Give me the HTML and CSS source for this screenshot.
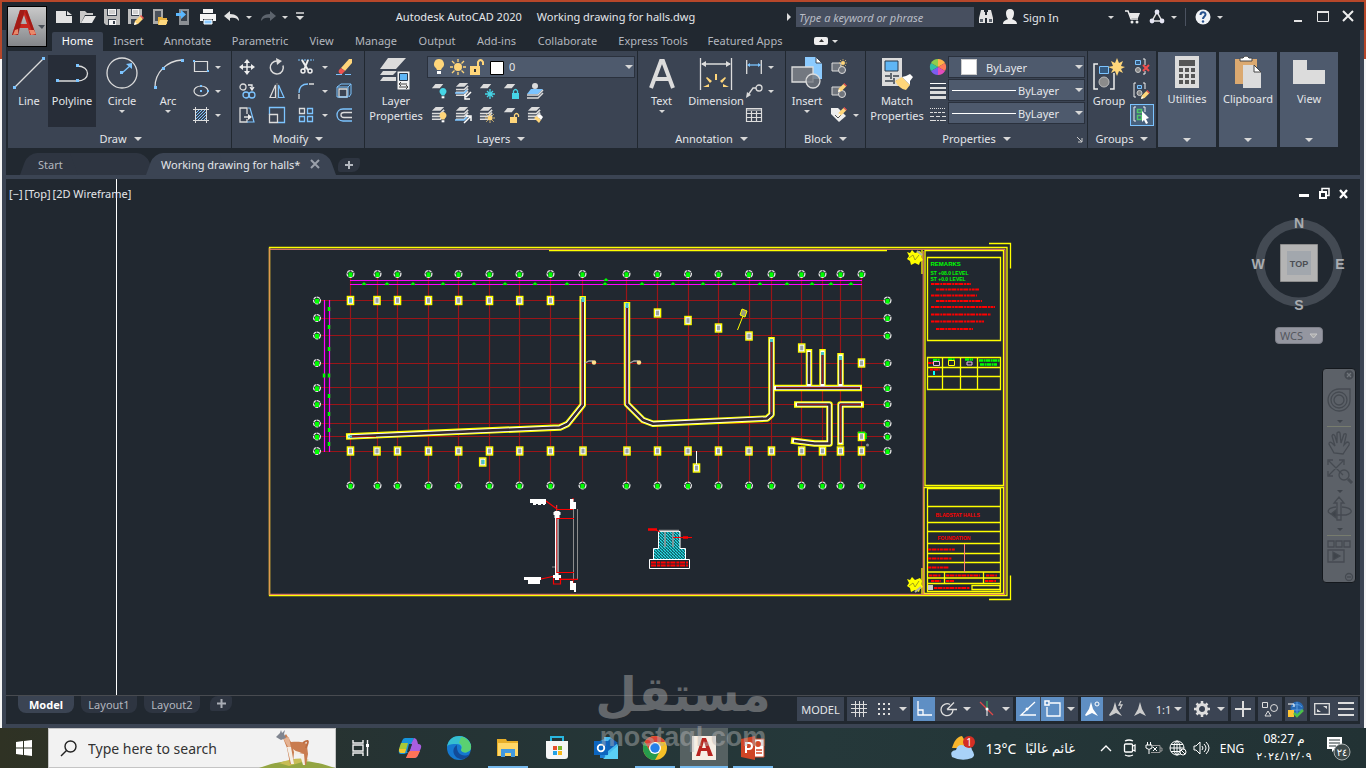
FILE: index.html
```html
<!DOCTYPE html>
<html lang="en">
<head>
<meta charset="utf-8">
<title>Autodesk AutoCAD 2020 - Working drawing for halls.dwg</title>
<link rel="stylesheet" href="styles.css">
</head>
<body>
<svg class="defs" aria-hidden="true">
  <defs>
    <symbol id="sheet" viewBox="0 0 16 16"><path d="M5 1h9l-4 5H1z" fill="#dcdcdc"/></symbol>
    <symbol id="stack" viewBox="0 0 16 16"><path d="M5 0h9l-4 4H1z" fill="#dcdcdc"/><path d="M1 7h9l4-4M1 10h9l4-4M1 13h9l4-4" fill="none" stroke="#dcdcdc" stroke-width="1.700"/></symbol>
    <symbol id="bulb" viewBox="0 0 10 16"><path d="M5 0a5 5 0 0 1 3 9l-1 2H3L2 9a5 5 0 0 1 3-9z"/><path d="M3 12h4v3H3z" fill="#fff"/></symbol>
    <symbol id="sun" viewBox="0 0 16 16"><circle cx="8" cy="8" r="4"/><path d="M8 0v3M8 13v3M0 8h3M13 8h3M2 2l2.500 2.500M11.500 11.500L14 14M14 2l-2.500 2.500M4.500 11.500L2 14" stroke="currentColor" stroke-width="1.300"/></symbol>
    <symbol id="pencil" viewBox="0 0 10 10"><path d="M0 10l1-4 5-5 3 3-5 5z" fill="#ffd67a"/><path d="M6 1l1-1 3 3-1 1z" fill="#f0534f"/><path d="M0 10l1-3 2 2z" fill="#fff"/></symbol>
    <pattern id="hatch" width="3" height="3" patternUnits="userSpaceOnUse"><path d="M0 3l3-3" stroke="#7cc4ff"/></pattern>
    <pattern id="tealhatch" width="3" height="3" patternUnits="userSpaceOnUse"><rect width="3" height="3" fill="#0d5a62"/><path d="M0 0l3 3" stroke="#29e0ea" stroke-width="1.200"/></pattern>
    <marker id="bubble" markerUnits="userSpaceOnUse" markerWidth="12" markerHeight="12" refX="6" refY="6" viewBox="0 0 12 12"><circle cx="6" cy="6" r="3.400" fill="#212830" stroke="#e6e6e6" stroke-width="1.300" stroke-dasharray="3.300 .6"/><rect x="4" y="4.300" width="4" height="4.700" fill="#0f0"/></marker>
    <marker id="footing" markerUnits="userSpaceOnUse" markerWidth="10" markerHeight="12" refX="5" refY="6" viewBox="0 0 10 12"><rect x="1.900" y="2" width="6.200" height="8" fill="#9aa4a4" stroke="#ff0" stroke-width="1.400"/><rect x="3" y="3.200" width="4" height="5.600" fill="none" stroke="#fff" stroke-width=".9"/></marker>
    <marker id="tick" markerUnits="userSpaceOnUse" markerWidth="6" markerHeight="4" refX="3" refY="2" viewBox="0 0 6 4"><path d="M.8 2.200h4.400M2 1.200h2" stroke="#0f0" stroke-width="1.500"/></marker>
    <marker id="vtick" markerUnits="userSpaceOnUse" markerWidth="4" markerHeight="6" refX="2" refY="3" viewBox="0 0 4 6"><path d="M2 1v4" stroke="#0f0" stroke-width="2.500"/></marker>
  </defs>
</svg>

<div class="app">
  <header class="header">
    <button class="app-button" aria-label="Application menu">
      <svg width="38" height="39" viewBox="0 0 38 39"><path d="M4 28L12 3h7l9 25h-6l-2-7h-9l-1 7zM12 17h7l-3-9z" fill="#c9271f" fill-rule="evenodd"/><path d="M12 3h5l-7 25H4zM19 3l9 25-3-1-8-22z" fill="#8e1512" opacity=".65"/><path d="M5 28l5-1v-5l-3 1zM21 23l2 5 5-1-2-4z" fill="#e8896b"/><path d="M30 18h7l-3 4z" fill="#4a5058"/></svg>
    </button>
    <div class="header-main">
      <div class="titlebar">
        <div class="qat">
          <button class="tool" aria-label="New"><svg width="16" height="16"><path d="M0 2h10v5h6v7H0z" fill="#e2e2e2"/><path d="M11 2l5 4h-5z" fill="#e2e2e2"/></svg></button>
          <button class="tool" aria-label="Open"><svg width="16" height="16"><path d="M0 14V2h5l2 2h6v2H5L1 14z" fill="#c8c8c8"/><path d="M5 7h11l-4 7H1z" fill="#e6e6e6"/></svg></button>
          <button class="tool" aria-label="Save"><svg width="16" height="16"><path d="M0 0h16v16H2l-2-2z" fill="#bdbdbd"/><path d="M3 0h10v7H3zM4 10h8v6H4z" fill="#39414c"/><path d="M4 0h8v6H4zM5 11h7v5H5z" fill="#f4f4f4"/><path d="M5 2h6M5 4h6" stroke="#aaa"/><path d="M9 12h2v3H9z" fill="#39414c"/></svg></button>
          <button class="tool" aria-label="Save as"><svg width="16" height="16"><path d="M0 0h14v9l-6 6H0z" fill="#bdbdbd"/><path d="M3 0h8v7H3zM3 10h6v5H3z" fill="#39414c"/><path d="M4 0h7v6H4z" fill="#f4f4f4"/><path d="M5 2h5M5 4h5" stroke="#aaa"/><use href="#pencil" x="6" y="6" width="10" height="10"/></svg></button>
          <button class="tool" aria-label="Open from mobile"><svg width="16" height="16"><path d="M1 0h10v15H1z" fill="#aaa"/><path d="M3 2h6v10H3z" fill="#4b525c"/><path d="M6 8h4l1 1h4v6H6z" fill="#e8b13e"/><path d="M8 11h8l-2 5H6z" fill="#ffd87f"/></svg></button>
          <button class="tool" aria-label="Save to mobile"><svg width="16" height="16"><path d="M3 0h10v16H3z" fill="#8b8f94"/><path d="M5 2h6v10H5z" fill="#3b424c"/><path d="M0 4h5V1l5 4.500L5 10V7H0z" fill="#5bb8ff"/></svg></button>
          <button class="tool" aria-label="Plot"><svg width="16" height="16"><path d="M3 0h10v4H3zM0 5h16v7h-3v-2H3v2H0z" fill="#f4f4f4"/><path d="M4 11h8v4H4z" fill="#8ccbff" stroke="#fff"/></svg></button>
          <button class="tool" aria-label="Undo"><svg width="16" height="16"><path d="M0 7l6-5v3c6 0 9 3 9 7-2-3-5-4-9-3v3z" fill="#e2e2e2"/></svg></button>
          <button class="drop" aria-label="Undo list"></button>
          <button class="tool redo" aria-label="Redo"><svg width="16" height="16"><path d="M16 7l-6-5v3C4 5 1 8 1 12c2-3 5-4 9-3v3z" fill="#5d646d"/></svg></button>
          <button class="drop" aria-label="Redo list"></button>
          <button class="tool custom" aria-label="Customize"><svg width="10" height="10"><path d="M1 1h8" stroke="#ddd" stroke-width="1.500"/><path d="M1 4h8L5 8z" fill="#ddd"/></svg></button>
        </div>
        <h1 class="doc-title"><span>Autodesk AutoCAD 2020</span><span>Working drawing for halls.dwg</span></h1>
        <div class="title-tools">
          <button class="search-toggle" aria-label="Collapse search"><svg width="5" height="8"><path d="M0 0l4 4-4 4z" fill="#ddd"/></svg></button>
          <input class="help-search" type="text" placeholder="Type a keyword or phrase" aria-label="Type a keyword or phrase">
          <button class="tool" aria-label="Search"><svg width="16" height="16"><path d="M3 1h3v2h1v11H1V9zM10 1h3l2 8v5H9V3h1zM6 6h4v3H6z" fill="#e4e4e4"/><path d="M2 10h3v3H2zM11 10h3v3h-3z" fill="#59616b"/></svg></button>
          <button class="tool" aria-label="Account"><svg width="16" height="16"><path d="M8 0c3 0 4 2 4 4 0 3-1 5-2 6 2 1 5 2 5 5H1c0-3 3-4 5-5-1-1-2-3-2-6 0-2 1-4 4-4z" fill="#eee"/></svg></button>
          <button class="sign-in">Sign In</button>
          <button class="drop" aria-label="Account menu"></button>
          <button class="tool cart" aria-label="App Store"><svg width="16" height="16"><path d="M0 2h3l3 8h7" fill="none" stroke="#eee" stroke-width="1.500"/><path d="M4 4h11l-2 5H6z" fill="#e8e8e8"/><circle cx="7" cy="13" r="1.500" fill="#eee"/><circle cx="12" cy="13" r="1.500" fill="#eee"/></svg></button>
          <button class="tool" aria-label="Stay connected"><svg width="16" height="16"><path d="M8 3L3 12h10z" fill="none" stroke="#e2e2e2" stroke-width="1.500"/><g fill="#e6e6f4"><circle cx="8" cy="3" r="2.400"/><circle cx="3" cy="12" r="2.400"/><circle cx="13" cy="12" r="2.400"/></g></svg></button>
          <button class="drop" aria-label="Connect menu"></button>
          <span class="divider"></span>
          <button class="tool" aria-label="Help"><svg width="16" height="16"><circle cx="8" cy="8" r="7.500" fill="#f1f3f6"/><path d="M5.500 6c0-3.500 5-3.500 5-.5C10.500 7.500 8 7.500 8 10" fill="none" stroke="#26518d" stroke-width="2"/><circle cx="8" cy="12.500" r="1.200" fill="#26518d"/></svg></button>
          <button class="drop help-drop" aria-label="Help menu"></button>
          <button class="win" aria-label="Minimize"><svg width="14" height="14"><path d="M3 11h8" stroke="#e4e4e4" stroke-width="2"/></svg></button>
          <button class="win" aria-label="Maximize"><svg width="14" height="14"><path d="M1.500 1.500h11v10h-11z" fill="none" stroke="#e4e4e4"/><path d="M1 2h12" stroke="#e4e4e4" stroke-width="2"/></svg></button>
          <button class="win" aria-label="Close"><svg width="14" height="14"><path d="M2 1l10 10M12 1L2 11" stroke="#eee" stroke-width="2"/></svg></button>
        </div>
      </div>
      <nav class="ribbon-tabs" aria-label="Ribbon tabs">
        <button class="on">Home</button><button>Insert</button><button>Annotate</button><button>Parametric</button><button>View</button><button>Manage</button><button>Output</button><button>Add-ins</button><button>Collaborate</button><button>Express Tools</button><button>Featured Apps</button>
        <button class="ribbon-min" aria-label="Minimize ribbon"><svg width="24" height="10"><rect y="1" width="14" height="8" rx="2" fill="#eee"/><path d="M5 6h5L7.500 3z" fill="#333"/><path d="M18 4h6l-3 3z" fill="#ddd"/></svg></button>
      </nav>
    </div>
  </header>

  <div class="ribbon">
    <section class="panel draw">
      <div class="panel-body">
        <button class="big"><svg width="32" height="32"><path d="M2 30L30 2" stroke="#dcdcdc" stroke-width="1.300"/><path d="M0 29h3v3H0zM29 0h3v3h-3z" fill="#7cc4ff"/></svg>Line</button>
        <button class="big on"><svg width="32" height="32"><path d="M1 24h20M21 9c14 0 14 15 0 15" fill="none" stroke="#dcdcdc" stroke-width="1.300"/><path d="M0 22h3v3H0zM20 22h3v3h-3zM20 7h3v3h-3z" fill="#7cc4ff"/></svg>Polyline</button>
        <button class="big"><svg width="32" height="32"><circle cx="16" cy="16" r="15" fill="none" stroke="#dcdcdc" stroke-width="1.300"/><path d="M16 16l9-8" stroke="#7cc4ff" stroke-width="1.300"/><path d="M14 14h3v3h-3zM26 6v6l-6-5z" fill="#7cc4ff"/></svg>Circle<i class="caret"></i></button>
        <button class="big"><svg width="32" height="32"><path d="M3 30C3 16 14 4 30 3" fill="none" stroke="#dcdcdc" stroke-width="1.300"/><path d="M2 29h3v3H2zM29 2h3v3h-3zM10 10h3v3h-3z" fill="#7cc4ff"/></svg>Arc<i class="caret"></i></button>
        <div class="smalls one">
          <button class="tool" aria-label="Rectangle"><svg width="16" height="16"><path d="M1 2.500h13.500v10H1.500V2" fill="none" stroke="#dcdcdc" stroke-width="1.200"/><path d="M0 1h2v2H0zM14 11h2v2h-2z" fill="#7cc4ff"/></svg></button><button class="drop" aria-label="Rectangle list"></button>
          <button class="tool" aria-label="Ellipse"><svg width="16" height="16"><ellipse cx="8" cy="8" rx="7" ry="5" fill="none" stroke="#dcdcdc" stroke-width="1.200"/><path d="M7 2h2v2H7zM7 7h2v2H7zM14 7h2v2h-2z" fill="#7cc4ff"/></svg></button><button class="drop" aria-label="Ellipse list"></button>
          <button class="tool" aria-label="Hatch"><svg width="16" height="16"><rect x="3" y="3" width="10" height="10" fill="url(#hatch)"/><path d="M2.500 0v16M13.500 0v16M0 2.500h16M0 13.500h16" stroke="#dcdcdc"/></svg></button><button class="drop" aria-label="Hatch list"></button>
        </div>
      </div>
      <button class="panel-name">Draw<i class="caret"></i></button>
    </section>

    <section class="panel modify">
      <div class="panel-body">
        <div class="smalls mods">
          <button class="tool" aria-label="Move"><svg width="16" height="16"><path d="M8 2v12M2 8h12" stroke="#eee" stroke-width="1.500"/><path d="M8 0l3 4H5zM8 16l3-4H5zM0 8l4-3v6zM16 8l-4-3v6z" fill="#eee"/></svg></button>
          <button class="tool" aria-label="Rotate"><svg width="16" height="16"><path d="M8 2A6.500 6.500 0 1 0 14 6.500" fill="none" stroke="#dcdcdc" stroke-width="1.500"/><path d="M7-1l6 3-5 4z" fill="#dcdcdc"/></svg></button>
          <button class="tool" aria-label="Trim"><svg width="16" height="16"><path d="M0 1h16" stroke="#7cc4ff" stroke-dasharray="2 1"/><path d="M4 1l6 10M10 1L6 11" stroke="#eee" stroke-width="2"/><circle cx="5" cy="12" r="2" fill="none" stroke="#eee" stroke-width="1.500"/><circle cx="12" cy="12" r="2" fill="none" stroke="#eee" stroke-width="1.500"/></svg></button><button class="drop" aria-label="Trim list"></button>
          <button class="tool" aria-label="Erase"><svg width="16" height="16"><path d="M0 15.500h16" stroke="#7cc4ff" stroke-dasharray="6 3"/><path d="M5 9l8-9h3v4l-7 8z" fill="#ffd67a"/><path d="M5 9l4 3-3 3c-3 0-4-2-3-4z" fill="#f0534f"/></svg></button>
          <button class="tool" aria-label="Copy"><svg width="16" height="16"><g fill="none" stroke-width="1.300"><circle cx="4" cy="4" r="3" stroke="#dcdcdc"/><circle cx="7" cy="12" r="3" stroke="#7cc4ff"/><circle cx="13" cy="12" r="3" stroke="#7cc4ff"/><path d="M9 2h4v4M11 4l2 3 2-3" stroke="#eee"/></g></svg></button>
          <button class="tool" aria-label="Mirror"><svg width="16" height="16"><path d="M6.500 2v12.500H1z" fill="none" stroke="#dcdcdc" stroke-width="1.200"/><path d="M9.500 2v12.500H15z" fill="none" stroke="#7cc4ff" stroke-width="1.200"/><path d="M8 0v16" stroke="#888"/></svg></button>
          <button class="tool" aria-label="Fillet"><svg width="16" height="16"><path d="M1 16v-5M11 1h5" stroke="#dcdcdc" stroke-width="1.300"/><path d="M1 10C1 4 4 1 10 1" fill="none" stroke="#7cc4ff" stroke-width="1.300"/></svg></button><button class="drop" aria-label="Fillet list"></button>
          <button class="tool" aria-label="Explode"><svg width="16" height="16"><path d="M3 6h8v8H3z" fill="none" stroke="#dcdcdc" stroke-width="1.300"/><path d="M1 4l4-3h10v10l-2 3M1 4h11v10H1zM12 4l3-3" fill="none" stroke="#7cc4ff"/></svg></button>
          <button class="tool" aria-label="Stretch"><svg width="16" height="16"><path d="M8 7V1H1v14h7v-3M5 10h6" fill="none" stroke="#dcdcdc" stroke-width="1.300"/><path d="M9 7l4 3-4 3z" fill="#eee"/><path d="M9 1h2l4 14H8" fill="none" stroke="#7cc4ff" stroke-width="1.200"/></svg></button>
          <button class="tool" aria-label="Scale"><svg width="16" height="16"><path d="M.5 8V.5h15v15H9" fill="none" stroke="#7cc4ff" stroke-width="1.300"/><path d="M.5 7.500h8v8h-8z" fill="none" stroke="#dcdcdc" stroke-width="1.300"/></svg></button>
          <button class="tool" aria-label="Array"><svg width="16" height="16" fill="none" stroke="#7cc4ff" stroke-width="1.300"><path d="M1.500 1.500h5v5h-5z" stroke="#dcdcdc"/><path d="M9.500 1.500h5v5h-5zM1.500 9.500h5v5h-5zM9.500 9.500h5v5h-5z"/></svg></button><button class="drop" aria-label="Array list"></button>
          <button class="tool" aria-label="Offset"><svg width="16" height="16" fill="none" stroke-width="1.300"><path d="M16 2H7C-1 2-1 14 7 14h9" stroke="#7cc4ff"/><path d="M16 5.500H8c-4 0-4 5 0 5h8" stroke="#dcdcdc"/></svg></button>
        </div>
      </div>
      <button class="panel-name">Modify<i class="caret"></i></button>
    </section>

    <section class="panel layers">
      <div class="panel-body">
        <button class="big wide"><svg width="34" height="34"><path d="M9 1h18L17 12H1zM4 14h14l-4 4H1zM4 20h13v4H1z" fill="#dcdcdc"/><path d="M18 14h13v19H18z" fill="#f1f1f1" stroke="#3b4453"/><path d="M20.500 16.500h8v7h-8z" fill="#5fb6f5" stroke="#28384b"/><path d="M20 27h8M20 30h8M22 25l-2 2 2 2M27 28l2 2-2 2" fill="none" stroke="#444"/></svg>Layer Properties</button>
        <div class="layer-tools">
          <div class="combo">
            <svg class="layer-state" width="81" height="20"><use href="#bulb" x="5" y="2" width="12" height="16" fill="#ffd67a"/><use href="#sun" x="22" y="2" width="16" height="16" fill="#ffd67a" color="#ffd67a"/><path d="M42 9h10v9H42z" fill="#ffd67a"/><path d="M50 9V5q2.500-4 5 0v3" fill="none" stroke="#ffd67a" stroke-width="2"/><path d="M46 12h2v3h-2z" fill="#333"/><path d="M62.500 4.500h13v13h-13z" fill="#fff" stroke="#000"/></svg>
            <select aria-label="Layer"><option>0</option></select>
          </div>
          <div class="smalls layer-grid">
            <button class="tool" aria-label="Layer off"><svg width="16" height="16"><use href="#sheet" width="14" height="14"/><use href="#bulb" x="8" y="5" width="8" height="11" fill="#46d5e6"/></svg></button>
            <button class="tool" aria-label="Isolate"><svg width="16" height="16"><use href="#stack" width="15" height="15"/><path d="M0 10h9l3-3" fill="none" stroke="#7cc4ff" stroke-width="1.500"/><path d="M16 9l-5 5M10 11v5h5" fill="none" stroke="#fff" stroke-width="1.500"/></svg></button>
            <button class="tool" aria-label="Freeze"><svg width="16" height="16"><use href="#sheet" width="14" height="14"/><path d="M11 6v10M6 11h10M8 8l6 6M14 8l-6 6" stroke="#46d5e6" stroke-width="1.300"/></svg></button>
            <button class="tool" aria-label="Lock"><svg width="16" height="16"><use href="#sheet" width="14" height="14"/><path d="M9 10h7v6H9z" fill="#46d5e6"/><path d="M10.500 10V8q2-3 4 0v2" fill="none" stroke="#46d5e6" stroke-width="1.300"/></svg></button>
            <button class="tool" aria-label="Make current"><svg width="16" height="16"><path d="M4 6h12l-5 5H0z" fill="#7cc4ff"/><circle cx="8" cy="3" r="3" fill="#dcdcdc"/><path d="M0 12h11l5-5M0 15h11l5-5" fill="none" stroke="#dcdcdc" stroke-width="1.500"/></svg></button>
            <button class="tool" aria-label="Turn all on"><svg width="16" height="16"><use href="#stack" width="15" height="15"/><use href="#bulb" x="8" y="5" width="8" height="11" fill="#ffd67a"/></svg></button>
            <button class="tool" aria-label="Unisolate"><svg width="16" height="16"><use href="#stack" width="15" height="15"/><path d="M0 13h9l3-3" fill="none" stroke="#7cc4ff" stroke-width="1.500"/><path d="M9 16l6-6M11 9h5v5" fill="none" stroke="#fff" stroke-width="1.500"/></svg></button>
            <button class="tool" aria-label="Thaw"><svg width="16" height="16"><use href="#stack" width="15" height="15"/><use href="#sun" x="6" y="6" width="10" height="10" fill="#ffd67a" color="#ffd67a"/></svg></button>
            <button class="tool" aria-label="Unlock"><svg width="16" height="16"><use href="#sheet" width="14" height="14"/><path d="M7 10h7v6H7z" fill="#ffd67a"/><path d="M11.500 10V8q2-3 4 0v2" fill="none" stroke="#ffd67a" stroke-width="1.300"/></svg></button>
            <button class="tool" aria-label="Match layer"><svg width="16" height="16"><use href="#stack" width="15" height="15"/><path d="M7 11l3-2 4 4-2 3z" fill="#ffd67a"/><path d="M10 9l3-2 3 3-2 3z" fill="#fff"/></svg></button>
          </div>
        </div>
      </div>
      <button class="panel-name">Layers<i class="caret"></i></button>
    </section>

    <section class="panel annotation">
      <div class="panel-body">
        <button class="big"><svg width="32" height="32"><path d="M5 31L15 4h2l10 27M9 22h14" fill="none" stroke="#dcdcdc" stroke-width="4"/></svg>Text<i class="caret"></i></button>
        <button class="big wide"><svg width="34" height="34"><path d="M1.500 1v32M32.500 1v32M3 7h28" stroke="#dcdcdc" stroke-width="1.300"/><path d="M2 7l5-3v6zM32 7l-5-3v6z" fill="#dcdcdc"/><path d="M16 17h2v6h-2zM8 20l5 4-2 2-4-5zM26 20l-5 4 2 2 4-5zM4 30l6-3v3zM24 27l6 3h-6z" fill="#ffd67a"/></svg>Dimension</button>
        <div class="smalls one">
          <button class="tool" aria-label="Linear"><svg width="16" height="16"><path d="M.7 1v14M15.300 1v14" stroke="#dcdcdc" stroke-width="1.300"/><path d="M2 6h12" stroke="#7cc4ff" stroke-width="1.300"/><path d="M1 6l3-2v4zM15 6l-3-2v4z" fill="#7cc4ff"/></svg></button><button class="drop" aria-label="Linear list"></button>
          <button class="tool" aria-label="Leader"><svg width="16" height="16"><circle cx="13" cy="5" r="3" fill="none" stroke="#dcdcdc" stroke-width="1.300"/><path d="M10 5H7l-5 7" fill="none" stroke="#dcdcdc" stroke-width="1.300"/><path d="M0 15l1-6 4 3z" fill="#dcdcdc"/></svg></button><button class="drop" aria-label="Leader list"></button>
          <button class="tool" aria-label="Table"><svg width="16" height="16"><path d="M.5 1.500h15v13H.5zM1 3h14M1 6.500h14M1 10.500h14M5.500 4v10M10.500 4v10" fill="none" stroke="#dcdcdc" stroke-width="1.200"/></svg></button>
        </div>
      </div>
      <button class="panel-name">Annotation<i class="caret"></i></button>
    </section>

    <section class="panel block">
      <div class="panel-body">
        <button class="big"><svg width="32" height="32"><path d="M14 0h11l6 6v16H14z" fill="#8ccbff"/><path d="M25 0v6h6z" fill="#fff" stroke="#3b4453"/><path d="M1 10h21v15H1z" fill="#737880" stroke="#dcdcdc" stroke-width="1.300"/><circle cx="22" cy="24" r="7" fill="#737880" fill-opacity=".8" stroke="#dcdcdc" stroke-width="1.300"/></svg>Insert<i class="caret"></i></button>
        <div class="smalls one">
          <button class="tool" aria-label="Create block"><svg width="16" height="16"><path d="M1 4h9v8H1z" fill="#70757d" stroke="#dcdcdc"/><circle cx="11" cy="11" r="3.500" fill="#70757d" stroke="#dcdcdc"/><use href="#sun" x="8" y="0" width="8" height="8" fill="#ffd67a" color="#ffd67a"/></svg></button><span></span>
          <button class="tool" aria-label="Edit block"><svg width="16" height="16"><path d="M1 4h9v8H1z" fill="#70757d" stroke="#dcdcdc"/><circle cx="11" cy="11" r="3.500" fill="#70757d" stroke="#dcdcdc"/><use href="#pencil" x="7" y="0" width="9" height="9"/></svg></button><span></span>
          <button class="tool" aria-label="Edit attributes"><svg width="16" height="16"><path d="M0 1h7l8 8-7 6-8-8z" fill="#eee"/><path d="M4 8l3 3 3-3" fill="none" stroke="#555"/><use href="#pencil" x="7" y="0" width="9" height="9"/></svg></button><button class="drop" aria-label="Attribute list"></button>
        </div>
      </div>
      <button class="panel-name">Block<i class="caret"></i></button>
    </section>

    <section class="panel properties">
      <div class="panel-body">
        <button class="big wide"><svg width="34" height="34"><path d="M2 1h20v28H2z" fill="#dcdcdc"/><path d="M5 4h13v10H5z" fill="#5fb6f5" stroke="#28384b"/><path d="M5 19h5M13 19h6M5 24h8M16 24h3M11 16v6M14 21v6" stroke="#39414c" stroke-width="1.500"/><path d="M15 24l7-4 8 8-4 5c-5-1-8-4-11-9z" fill="#ffd67a"/><path d="M22 20l4-1 4-2 3 3-3 4v4z" fill="#fff"/></svg>Match Properties</button>
        <div class="smalls single">
          <button class="tool" aria-label="Color"><svg width="16" height="16"><path d="M8 8V0a8 8 0 0 1 7 4z" fill="#ffb347"/><path d="M8 8l7-4a8 8 0 0 1 0 8z" fill="#ff7a59"/><path d="M8 8l7 4a8 8 0 0 1-7 4z" fill="#e24dbd"/><path d="M8 8v8a8 8 0 0 1-7-4z" fill="#7d5cf0"/><path d="M8 8l-7 4a8 8 0 0 1 0-8z" fill="#34bfa3"/><path d="M8 8L1 4a8 8 0 0 1 7-4z" fill="#8fce4c"/></svg></button>
          <button class="tool" aria-label="Lineweight"><svg width="16" height="16"><path d="M0 .5h16" stroke="#fff"/><path d="M0 5h16" stroke="#ddd" stroke-width="2"/><path d="M0 9.500h16M0 14.500h16" stroke="#ddd" stroke-width="3"/></svg></button>
          <button class="tool" aria-label="Linetype"><svg width="16" height="16" stroke="#ddd"><path d="M0 1.500h16" stroke-dasharray="1 1"/><path d="M0 5.500h16" stroke-dasharray="3 1"/><path d="M0 9.500h16" stroke-dasharray="4 2"/><path d="M0 13.500h16" stroke-dasharray="6 1 2 1"/></svg></button>
        </div>
        <div class="prop-combos">
          <div class="combo"><i class="swatch"></i><select aria-label="Object color"><option>ByLayer</option></select></div>
          <div class="combo"><i class="rule"></i><select aria-label="Lineweight"><option>ByLayer</option></select></div>
          <div class="combo"><i class="rule"></i><select aria-label="Linetype"><option>ByLayer</option></select></div>
        </div>
      </div>
      <div class="panel-foot"><button class="panel-name">Properties<i class="caret"></i></button><button class="launcher" aria-label="Properties dialog"><svg width="7" height="7"><path d="M1 1l5 5M6 2v4H2" fill="none" stroke="#ccc"/></svg></button></div>
    </section>

    <section class="panel groups">
      <div class="panel-body">
        <button class="big"><svg width="34" height="34"><path d="M6 7H2v25h4M18 32h4V16" fill="none" stroke="#eee" stroke-width="1.500"/><path d="M7.500 9.500h9v7h-9z" fill="#345a80" stroke="#7cc4ff"/><circle cx="12" cy="25" r="5" fill="#8b8b8b" stroke="#bbb"/><path d="M25 1l2 5 4-2-2 5 4 1-4 2 2 4-4-2-2 5-2-5-4 2 2-4-5-2 5-1-2-5 4 2z" fill="#ffd67a"/></svg>Group</button>
        <div class="smalls single">
          <button class="tool" aria-label="Ungroup"><svg width="16" height="16"><path d="M1.500 1.500h5v4h-5z" fill="#345a80" stroke="#7cc4ff"/><circle cx="4" cy="11" r="2.500" fill="#888" stroke="#ccc"/><path d="M9 0h2v6M11 12v3H9" fill="none" stroke="#eee"/><path d="M9 6l6 6M15 6l-6 6" stroke="#ef4c4c" stroke-width="2"/></svg></button>
          <button class="tool" aria-label="Group edit"><svg width="16" height="16"><path d="M2 0H0v14h2M9 0h2v6" fill="none" stroke="#eee"/><path d="M3.500 2.500h4v3h-4z" fill="#345a80" stroke="#7cc4ff"/><circle cx="5.500" cy="10" r="2.500" fill="#888" stroke="#ccc"/><use href="#pencil" x="7" y="7" width="9" height="9"/></svg></button>
          <button class="tool picked" aria-label="Group selection on/off"><svg width="16" height="16"><path d="M2 0H0v14h2M9 0h2v5" fill="none" stroke="#eee"/><path d="M3.500 2.500h4v3h-4zM3.500 8.500h4v4h-4z" fill="none" stroke="#51c66b" stroke-width="1.500"/><path d="M8 4l7 7-3 1 2 4-2 1-2-4-2 2z" fill="#fff"/></svg></button>
        </div>
      </div>
      <button class="panel-name">Groups<i class="caret"></i></button>
    </section>

    <button class="folded"><svg width="24" height="32"><path d="M0 0h24v32H0z" fill="#dcdcdc"/><path d="M4 4h16v6H4zM4 12h4v4H4zM10 12h4v4h-4zM16 12h4v4h-4zM4 18h4v4H4zM10 18h4v4h-4zM16 18h4v4h-4zM4 24h4v4H4zM10 24h4v4h-4zM16 24h4v4h-4z" fill="#555"/></svg>Utilities<i class="caret"></i></button>
    <button class="folded"><svg width="32" height="32"><path d="M3 3h22v25H3z" fill="#dba970"/><path d="M8 2h3q3-4 6 0h3v3H8z" fill="#fff" stroke="#444"/><path d="M11 9h11l7 7v16H11z" fill="#dcdcdc"/><path d="M22 9v7h7z" fill="#fff" stroke="#444"/></svg>Clipboard<i class="caret"></i></button>
    <button class="folded"><svg width="32" height="32"><path d="M0 4h14v10h18v14H0z" fill="#dcdcdc"/></svg>View<i class="caret"></i></button>
  </div>

  <nav class="file-tabs" aria-label="Open drawings">
    <button class="file-tab start">Start</button>
    <div class="file-tab current"><button>Working drawing for halls*</button><button class="tab-close" aria-label="Close drawing"><svg width="10" height="10"><path d="M1 1l8 8M9 1L1 9" stroke="#9aa0aa" stroke-width="2"/></svg></button></div>
    <button class="new-tab" aria-label="New drawing"><svg width="10" height="10"><path d="M5 1v8M1 5h8" stroke="#b5b9c0" stroke-width="2"/></svg></button>
  </nav>

  <main class="canvas">
    <svg class="drawing" viewBox="6 179 1354 516" role="img" aria-label="Foundation plan">
      <path d="M116.500 179v516" stroke="#fff"/>
      <g fill="none" stroke="#ff0" stroke-width="1.300">
        <path d="M269.500 247.500h737.500v348H269.500z"/>
        <path d="M549 250.500h338M989 243.500h21.500v25M989 599.500h21.500v-24"/>
        <path d="M925 250.500h78.500v235H925zM922 250v24M922 568v26M924 487.500h79.500v106H924z"/>
        <path d="M927.500 257.500h73v83h-73zM927.500 357.500h73v32h-73zM927.500 367.500h73M927.500 376.500h73M942.500 357v33M960.500 357v33M977.500 357v33"/>
        <path d="M927.500 488.500h73v103h-73zM944.500 572v12M983.500 572v12M972 585.500h28v4h-28z"/>
        <path d="M927 506.500h73M927 522.500h73M927 531.500h73M927 543.500h73M927 553.500h73M927 562.500h73M927 572h73M927 578h73M927 583.500h73" stroke-width="1.600"/>
      </g>
      <path d="M269.500 248v347" stroke="#e09a50" stroke-width="1.500"/>
      <path d="M270 249.300h735V594.300H270" fill="none" stroke="#fa8072"/>
      <path d="M923.200 251v343M964.500 544v28" stroke="#fa8072"/>
      <g fill="#ff0"><path d="M907 252l3 1 2-3 3 3 5-2 2 3-1 3 2 3-3 2-1 3-4-2-4 2-1-4-3-2 2-3z"/><path d="M907 579l3 1 2-3 3 3 5-2 2 3-1 3 2 3-3 2-1 3-4-2-4 2-1-4-3-2 2-3z"/></g>
      <path d="M917 251l5 4M915 592l6-5" stroke="#b4b4a0" stroke-width="2" fill="none"/>
      <path d="M909 258l4-3 2 5 4-5M909 586l4-3 2 4 4-6" stroke="#8a8a20" fill="none" stroke-width=".8"/>

      <path stroke="#9a1518" stroke-width="1.200" d="M350.500 274v211M377.500 274v211M397.500 274v211M428.500 274v211M458.500 274v211M489.500 274v211M519.500 274v211M550.500 274v211M582.500 274v211M626.500 274v211M657.500 274v211M688.500 274v211M718.500 274v211M749.500 274v211M771.500 274v211M801.500 274v211M822.500 274v211M840.500 274v211M861.500 274v211M317 300.500h571M317 318.500h571M317 335.500h571M317 363.500h571M317 387.500h571M317 404.500h571M317 423.500h571M317 436.500h571M317 451.500h571"/>
      <path stroke="#f0f" stroke-width="1.200" d="M350 280.500h512M350 284.500h512M324.500 300v152M329.500 300v152"/>
      <path class="m-tick" d="M364 284L387 284 413 284 443 284 474 284 505 284 535 284 567 284 605 284 606 280 642 284 673 284 703 284 734 284 760 284 787 284 812 284 831 284 851 284"/>
      <path class="m-vtick" d="M329 309L329 327 329 349 324 375.500 329 375.500 329 396 329 414 329 430 329 444"/>
      <path class="m-bubble" d="M350.500 274L377.500 274 397.500 274 428.500 274 458.500 274 489.500 274 519.500 274 550.500 274 582.500 274 626.500 274 657.500 274 688 274 718.500 274 749 274 771.500 274 801.500 274 822.500 274 840.500 274 861.500 274"/>
      <path class="m-bubble" d="M350.500 485.500L377.500 485.500 397.500 485.500 428.500 485.500 458.500 485.500 489.500 485.500 519.500 485.500 550.500 485.500 582.500 485.500 626.500 485.500 657.500 485.500 688 485.500 718.500 485.500 749 485.500 771.500 485.500 801.500 485.500 822.500 485.500 840.500 485.500 861.500 485.500"/>
      <path class="m-bubble" d="M317 300.500L317 318 317 335.500 317 363 317 388 317 404 317 423.500 317 436.500 317 451"/>
      <path class="m-bubble" d="M887.500 300.500L887.500 318 887.500 335.500 887.500 363 887.500 388 887.500 404 887.500 423.500 887.500 436.500 887.500 451"/>

      <g fill="none" stroke-linejoin="round">
        <g stroke="#ff0" stroke-width="6.500"><path d="M346 436.500L560 427.500 567.500 424 582.700 405V296M627 302v102L643 420l10 3.700L767 418.500l4.500-4V337M809 349v37M822.500 349v37M840.500 353v33M774 388h88M794 404.500h35.500v39l-15 0L791 440.500M864 404.500h-23.500v41"/></g>
        <g stroke="#fff" stroke-width="4.200"><path d="M347.500 436.500L560 427.500 567.500 424 582.700 405V297.500M627 303.500v100.500L643 420l10 3.700L767 418.500l4.500-4V338.500M809 350.500v37M822.500 350.500v37M840.500 354.500v33M774 388h86.500M795.500 404.500h34v39l-15 0L792.500 440.500M862.500 404.500h-22v39.500"/></g>
        <g stroke="#33272e" stroke-width="2.600"><path d="M350 436.500L560 427.500 567.500 424 582.700 405V299M627 307v97L643 420l10 3.700L767 418.500l4.500-4V342M809 352v32M822.500 354v30M840.500 358v26M776 388h84M797 404.500h32.500v39l-15 0L794 441M861 404.500h-20.500v38"/></g>
        <path stroke="#9a1518" d="M582.500 405V299M626.500 307v97M771.500 342v70M822.500 354v30M840.500 358v26M776 387.500h84M797 404.500h30M861 404.500h-20.500v38M352 436.500h24"/>
      </g>
      <path class="m-footing" d="M350.500 300.500L377 300.500 397.500 300.500 428.500 300.500 458.700 300.500 489.500 300.500 519.700 300.500 550.500 300.500"/>
      <path class="m-footing" d="M350.500 451L377 451 397.500 451 428.500 451 458.700 451 489.500 451 519.700 451 550.500 451 583 451 627 451 657.500 451 688 451 718.500 451 749 451 771.500 451 801.700 451 822.500 451 840.500 451 861.500 451"/>
      <path class="m-footing" d="M657.500 313L688 320.500 718.500 328 749 336 801.700 348 861.500 363 861.500 436.500 482.700 462 696.500 468"/>
      <path d="M696.500 451v13" stroke="#fff"/>
      <path d="M743 316l-5.500 14" stroke="#ff0"/>
      <path d="M742 309l5 2-2 6-5-2z" fill="#9a9a7a" stroke="#ff0"/>
      <path d="M349 299h3v3h-3zM581.500 297h3v5h-3zM625.500 303h3v5h-3zM770 339h3v3h-3zM821 352h3v3h-3zM839 356h3v4h-3zM481.500 460h3v4h-3zM348 435.500h4v2h-4z" fill="#48c4c9"/>
      <path d="M585 363l4-2h4M630 363l4-2h4" fill="none" stroke="#aaa" stroke-width="1.300"/><circle cx="594" cy="362.500" r="2.200" fill="#ffdf8c"/><circle cx="639" cy="362.500" r="2.200" fill="#ffdf8c"/>
      <path d="M858 432.500h7M866 433v6" stroke="#0f0" stroke-width="1.500"/><circle cx="867.500" cy="445" r="1.500" fill="#888"/>

      <g class="cad-text green"><text x="930.500" y="266" font-size="6">REMARKS</text><text x="930.500" y="274.500" font-size="5">ST +08.0 LEVEL</text><text x="930.500" y="280.500" font-size="5">ST +0.0 LEVEL</text></g>
      <g fill="none" stroke="#f00" stroke-width="2.200" stroke-dasharray="3 .5 5 .8 2 .6">
        <path d="M931 284h40M936 289.500h43M931 295.500h46M936 301h46M931 307h64M931 314.500h60M931 321.500h53M936 329h37"/>
        <path d="M928 549.500h27M928 558.500h24M928 567.500h21M929 575.500h12M946 575.500h34M986 575.500h11M931 581h10M946 581h8M985 581h11M934 588h36"/>
        <path d="M928 363h6M930 369.500h10"/>
      </g>
      <path d="M979 360.500h21M980 364.500h17M965 359.500h8M933 360h7M948 359.500h7" stroke="#0f0" stroke-width="2.500" stroke-dasharray="4 .6 2 .4"/>
      <path d="M933.500 361.500h6v4h-6zM967 362h5v3h-5z" fill="none" stroke="#e8b8e8"/><path d="M948.500 360.500h6v5h-6z" fill="none" stroke="#ff0"/><path d="M934 371v4" stroke="#0ff" stroke-width="2"/>
      <path d="M928 585h5v5h-5z" fill="#c9c9c9"/>
      <g class="cad-text red"><text x="935.500" y="517" font-size="5">BLADSTAT HALLS</text><text x="937.500" y="540" font-size="5">FOUNDATION</text></g>

      <g stroke="#8c8c8c" fill="none"><path d="M573.500 509v70M577.500 509v70M552 567h4"/></g>
      <path d="M555.500 512v64M558 512v64" stroke="#fff"/><path d="M556.700 505v71" stroke="#f44"/>
      <path d="M546 501l11 8M557 509.500h16M557 518.500h17M557 572.500h17M541 579l14-3M557 579.300h21M553.500 577v7h7v-7M573 498v3M573 579v4" fill="none" stroke="#f00" stroke-width="1.200"/>
      <path d="M554.500 511h5v1h1v3h-1v3h-5v-3h-1v-3h1zM553 575h3v-2h2v2h3v3h-2v2h-4v-2h-2zM570 499h3.500v3h2.500v7h-6zM570 581h3v2h3v9h-2v-2h-4zM524 577h17v3h-1v4h-12v-4h-4zM530 499h16v5h-1v1h-2v-1h-2v1h-3v-1h-2v1h-3v-2h-3z" fill="#fff"/>
      <path d="M653.500 548.500h5v-17h21.500v17h5.500v11h-32z" fill="url(#tealhatch)" stroke="#fff"/>
      <path d="M665 532v15M673 532v15M659 530.500h20" stroke="#999" stroke-width="1.500"/>
      <path d="M649.500 559.500h40v9h-40z" fill="none" stroke="#fff"/>
      <path d="M651 562.500h37M651 565.500h37" stroke="#f00" stroke-width="2.200" stroke-dasharray="5 1 3 .7"/>
      <path d="M648 529.500h9M683 537.500h5" stroke="#f00" stroke-width="2.500"/><path d="M673 537.500h19M656 530l4 2" stroke="#f00"/>
    </svg>
    <div class="viewport-label"><button>[−]</button><button>[Top]</button><button>[2D Wireframe]</button></div>
    <div class="viewport-win">
      <button aria-label="Minimize viewport"><svg width="12" height="12"><path d="M1 8.500h10" stroke="#fff" stroke-width="3"/></svg></button>
      <button aria-label="Restore viewport"><svg width="12" height="12"><path d="M4 4V1.500h7v7H8" fill="none" stroke="#fff" stroke-width="1.500"/><path d="M2 5h6v6H2z" fill="none" stroke="#fff" stroke-width="2"/></svg></button>
      <button aria-label="Close viewport"><svg width="12" height="12"><path d="M2 3l7 8M9 3l-7 8" stroke="#fff" stroke-width="2.300"/></svg></button>
    </div>
    <div class="viewcube">
      <svg width="96" height="96" viewBox="0 0 96 96" role="img" aria-label="View cube, top">
        <circle cx="48" cy="48" r="39" fill="none" stroke="#434a53" stroke-width="9"/>
        <path d="M29.500 29.500h37v37h-37z" fill="#b4b4b4" stroke="#8d8d8d"/><path d="M36 36h24v24H36z" fill="#a2a7ad"/>
        <g class="cube-text"><text x="48" y="13">N</text><text x="48" y="95">S</text><text x="7" y="54">W</text><text x="89" y="54">E</text></g>
        <text class="cube-top" x="48" y="52">TOP</text>
      </svg>
    </div>
    <button class="wcs">WCS<svg width="9" height="6"><path d="M1 1h7L4.500 5z" fill="#aaa" stroke="#c8c8c8"/></svg></button>
    <div class="navbar">
      <svg width="30" height="211" viewBox="0 0 30 211" fill="none" stroke="#454a51" stroke-width="1.300" role="img" aria-label="Navigation bar"><circle cx="25" cy="5" r="4" fill="#484d54"/><path d="M23 3l4 4M27 3l-4 4" stroke="#70757b"/><path d="M15 19h11v10a11 11 0 1 1-11-10z"/><circle cx="15" cy="30" r="8"/><circle cx="15" cy="30" r="5"/><path d="M13 50h6l-3 3zM13 120h6l-3 3zM13 158h6l-3 3z" fill="#3f444b" stroke="none"/><path d="M3 56.500h24M3 165.500h24" stroke="#777c6e" stroke-width="1"/><path d="M10 83L5 74q0-3 3-1l3 3-3-10q1-3 3 0l2 7V63q2-2 3 0l1 10 3-9q3-1 2 2l-2 9 3-3q3 0 2 3l-4 6-2 3z"/><path d="M5 91l14 14M19 91L5 105M4 95v-5h5M15 90h5v5M4 101v5h5"/><circle cx="20" cy="105" r="5"/><path d="M24 109l4 4" stroke-width="3"/><path d="M13 150v-17h-3l5-6 5 6h-3v17zM12 137c-9 1-10 6-4 7M12 145h10c8-2 7-7-4-8"/><path d="M12 140l-5 4 5 4z" fill="#3f444b"/><path d="M4 171h6v6H4zM12 171h6v6h-6zM20 171h6v6h-6zM4 180h16v12H4z"/><path d="M9 182v8l7-4z" fill="#3f444b"/><circle cx="25" cy="207" r="3.500"/><path d="M23 207h4"/></svg>
    </div>
  </main>

  <footer class="status">
    <nav class="layout-tabs" aria-label="Layouts">
      <button class="on">Model</button><button>Layout1</button><button>Layout2</button><button class="plus" aria-label="New layout"><svg width="9" height="9"><path d="M4.500 0v9M0 4.500h9" stroke="#a9adb5" stroke-width="2"/></svg></button>
    </nav>
    <div class="status-tools">
      <div class="sg"><button class="model-btn">MODEL</button></div>
      <div class="sg"><button class="w24" aria-label="Grid"><svg width="16" height="16"><path d="M4.500 0v16M8.500 0v16M12.500 0v16M0 3.500h16M0 7.500h16M0 11.500h16" stroke="#ddd"/></svg></button><button class="w25" aria-label="Snap"><svg width="14" height="14"><path d="M1 2h13M1 7h13M1 12h13" stroke="#ddd" stroke-width="2" stroke-dasharray="2 3"/></svg></button><button class="drop s" aria-label="Snap menu"></button></div>
      <div class="sg"><button class="lit" aria-label="Ortho"><svg width="16" height="16"><path d="M2 0v14h14M2 9h5v5" fill="none" stroke="#fff" stroke-width="1.300"/></svg></button><button class="w25" aria-label="Polar"><svg width="16" height="16"><path d="M13 9A6 6 0 1 1 10 3.500M7 8.500h10M7 8.500l7-7" fill="none" stroke="#ddd" stroke-width="1.300"/></svg></button><button class="drop s" aria-label="Polar menu"></button><button class="w25" aria-label="Isodraft"><svg width="16" height="16"><path d="M8 0v8" stroke="#3ec66b"/><path d="M1 1l13 13" stroke="#e04848" stroke-width="1.300"/><path d="M8 8v7" stroke="#fff"/><circle cx="8" cy="8" r="1.500" fill="#fff"/></svg></button><button class="drop s" aria-label="Isodraft menu"></button></div>
      <div class="sg"><button class="lit w24" aria-label="Object snap tracking"><svg width="18" height="16"><path d="M16 1L2 14h15" fill="none" stroke="#fff" stroke-width="1.300"/><circle cx="8" cy="8" r="1.500" fill="#fff"/></svg></button><button class="lit w24 next" aria-label="Object snap"><svg width="16" height="16"><path d="M5 2h10v13H2V6" fill="none" stroke="#fff" stroke-width="1.300"/><path d="M0 0h4v4H0z" fill="none" stroke="#fff" stroke-width="1.500"/></svg></button><button class="drop s" aria-label="Object snap menu"></button></div>
      <div class="sg"><button class="lit" aria-label="Annotation visibility"><svg width="16" height="16"><path d="M7 1l2 7 5 7-6-3-6 3-1-1 4-6z" fill="#fff"/><circle cx="13" cy="3" r="2" fill="none" stroke="#fff"/></svg></button><button class="w25" aria-label="Auto scale"><svg width="16" height="16"><path d="M7 1l2 7 5 7-6-3-6 3-1-1 4-6z" fill="#ccc"/><path d="M13 0l-2 4h3l-2 4" fill="none" stroke="#ccc" stroke-width="1.300"/></svg></button><button class="w24" aria-label="Annotation"><svg width="14" height="16"><path d="M7 1l2 7 4 7-6-3-6 3 4-7z" fill="#ccc"/></svg></button><button class="scale">1:1<i class="caret"></i></button></div>
      <div class="sg"><button class="w25" aria-label="Workspace"><svg width="16" height="16"><circle cx="8" cy="8" r="4.500" fill="none" stroke="#ddd" stroke-width="3"/><path d="M8 0v3M8 13v3M0 8h3M13 8h3M2.500 2.500l2 2M11.500 11.500l2 2M13.500 2.500l-2 2M4.500 11.500l-2 2" stroke="#ddd" stroke-width="2.500"/></svg></button><button class="drop s" aria-label="Workspace menu"></button></div>
      <div class="sg"><button class="w24" aria-label="Annotation monitor"><svg width="16" height="16"><path d="M8 0v16M0 8h16" stroke="#ddd" stroke-width="2"/></svg></button></div>
      <div class="sg"><button class="w24" aria-label="Isolate objects"><svg width="18" height="16"><path d="M1.500 1.500h5v5h-5zM7 10l3 5H4z" fill="none" stroke="#ddd"/><circle cx="13" cy="7" r="3.500" fill="none" stroke="#ddd"/></svg></button></div>
      <div class="sg"><button aria-label="Hardware acceleration"><svg width="16" height="16"><circle cx="9" cy="7" r="6.500" fill="#2769b3"/><path d="M4 6q5-5 10 0M9 1v12M4 9h10" fill="none" stroke="#5a9bdd"/><path d="M0 9h6v7H0z" fill="#ffc533"/><path d="M0 3h6v3" fill="none" stroke="#fff"/><path d="M6 12l3 3 6-6" fill="none" stroke="#4cc04a" stroke-width="2.500"/></svg></button></div>
      <div class="sg"><button class="w24" aria-label="Clean screen"><svg width="16" height="14"><path d="M.7 1.700h14.600v10.600H.7z" fill="none" stroke="#ddd" stroke-width="1.300"/><path d="M9 4h4v3zM7 10H3V7z" fill="#ddd"/></svg></button><button class="w24" aria-label="Customization"><svg width="16" height="16"><path d="M0 2h16M0 8h16M0 14h16" stroke="#ddd" stroke-width="2"/></svg></button></div>
    </div>
  </footer>
</div>

<div class="taskbar">
  <button class="start-btn" aria-label="Start"><svg width="16" height="16"><path d="M0 2l7-1v6.500H0zM8 1l8-1v7.500H8zM0 8.500h7V15l-7-1zM8 8.500h8V16l-8-1z" fill="#fff"/></svg></button>
  <label class="task-search">
    <svg width="17" height="17"><circle cx="10.500" cy="6.500" r="5.500" fill="none" stroke="#222" stroke-width="1.400"/><path d="M6.500 10.500L1 16" stroke="#222" stroke-width="1.400"/></svg>
    <input type="text" placeholder="Type here to search" aria-label="Type here to search">
    <svg class="guanaco" width="76" height="39" viewBox="0 0 76 39"><path d="M0 39q37-15 76 0z" fill="#93a543"/><path d="M20 34q20-7 30-3l-20 6z" fill="#c8bd55"/><path d="M24 9l4 10 3 16h3l1-12 10 2-1 11h3l2-11-1-8c1-4-8-5-16-4l-5-8z" fill="#c97c4f"/><path d="M24 9l5 9 3 1-2-11z" fill="#e5b292"/><path d="M44 14q7-5 4 2l-1 3" fill="none" stroke="#bd6c40" stroke-width="2"/><path d="M17 8l4-4 1-3 1 3 3-3-1 4 2 4-5 2z" fill="#808590"/><path d="M28 18h4l3 17h-3zM41 26l3 10h2l-1-11zM34 20q4 4 9 3l-7 3z" fill="#f5eee4"/></svg>
  </label>
  <div class="task-apps">
    <button aria-label="Task view"><svg width="18" height="16"><path d="M1 0v3h10V0M1 16v-3h10v3M1 5h10v6H1zM15.500 0v16" fill="none" stroke="#f1f1f1" stroke-width="1.400"/><path d="M14 4h3v3h-3z" fill="#fff"/></svg></button>
    <button aria-label="Copilot"><svg width="24" height="22"><path d="M7 1h9l-5 13q-2 3-5 3H3q-3 0-2-4L4 4q1-3 3-3z" fill="#1694dc"/><path d="M1 12l2-6h7l-2 7q-1 3-3 3-5 0-4-4z" fill="#a6c938"/><path d="M1 12h7l-1 4H3q-2 0-2-4z" fill="#f4c52e"/><path d="M16 1q3 0 4 6h-7zM14 7h6q4 0 3 4l-3 7q-1 3-4 3H8l3-5z" fill="#a95fe0"/><path d="M11 14h11l-2 4q-1 3-4 3H8z" fill="#ff7358"/><path d="M11 7h3l-3 8H9z" fill="#28333a"/></svg></button>
    <button aria-label="Edge"><svg width="24" height="24"><circle cx="12" cy="12" r="12" fill="#1578cf"/><path d="M0 11C1 3 7 0 12 0c9 0 13 8 12 12-1 5-9 6-10 2 2-3-1-6-4-6-5 0-9 0-10 3z" fill="#35bfd0"/><path d="M14 1c6 0 11 7 10 11-1 5-9 6-10 2 3-5-2-7-2-7z" fill="#5ad071"/><path d="M10 9c-7 4-3 15 6 14 4-1 6-3 7-5-7 4-14 0-13-9z" fill="#124b98"/></svg></button>
    <button class="running" aria-label="File Explorer"><svg width="22" height="20"><path d="M0 1h9l1 2h11v15H0z" fill="#e7ae28"/><path d="M1 5h20v13H1z" fill="#ffd767"/><path d="M4 11h14v8h-4v-4H8v4H4z" fill="#4299df"/></svg></button>
    <button aria-label="Microsoft Store"><svg width="24" height="24"><path d="M6 5V1h12v4" fill="none" stroke="#29b6df" stroke-width="2"/><path d="M1 5h22v15q0 3-3 3H4q-3 0-3-3z" fill="#f6f6f6"/><path d="M8 10h4v4H8z" fill="#e64f2a"/><path d="M13 10h4v4h-4z" fill="#7db82f"/><path d="M8 15h4v4H8z" fill="#24a2e6"/><path d="M13 15h4v4h-4z" fill="#fbb91a"/></svg></button>
    <button aria-label="Outlook"><svg width="24" height="24"><path d="M6 5l8-4 9 6v15H6z" fill="#1d80d7"/><path d="M10 1h6l8 8-13 13z" fill="#46bcf0"/><path d="M24 9v14H9z" fill="#5ad0f6"/><path d="M6 13l8 2 10-8-7-5z" fill="#1260b5"/><path d="M0 5h14v14H0z" fill="#0c65bf"/><circle cx="7" cy="12" r="3.300" fill="none" stroke="#fff" stroke-width="1.800"/></svg></button>
    <button class="running" aria-label="Chrome"><svg width="24" height="24"><circle cx="12" cy="12" r="12" fill="#f6bf27"/><path d="M1.600 6A12 12 0 0 1 22.400 6H12l-5 9z" fill="#dc4334"/><path d="M1.600 6A12 12 0 0 0 12 24l5-9H7z" fill="#279b4c"/><circle cx="12" cy="12" r="6" fill="#fff"/><circle cx="12" cy="12" r="4.700" fill="#2580e8"/></svg></button>
    <button class="running focus" aria-label="AutoCAD"><svg width="24" height="24"><path d="M0 0h24v24H0z" fill="#f6eee4"/><path d="M4 20L10 2h4l7 18h-5l-1-5H9l-1 5zM10 12h4l-2-7z" fill="#b82420" fill-rule="evenodd"/></svg></button>
    <button class="running" aria-label="PowerPoint"><svg width="24" height="24"><path d="M12 3h11v18H12z" fill="#fff" stroke="#d34828"/><path d="M0 3l14-3v24L0 21z" fill="#cf4526"/><circle cx="17" cy="8" r="3" fill="#d34828"/><path d="M15 14h6M15 17h6" stroke="#d34828" stroke-width="1.500"/><path d="M5 17V7h3q3 0 3 3t-3 3H5" fill="none" stroke="#fff" stroke-width="2"/></svg></button>
  </div>
  <div class="tray">
    <button class="weather"><svg width="26" height="26"><path d="M12 1c-6 1-8 6-10 12h10c5-4 2-9 0-12z" fill="#f9b62c"/><path d="M2 22q-3-6 4-7 2-7 9-4 6-2 7 4 4 5 0 8-10 4-20-1z" fill="#a9d2f8"/><circle cx="19" cy="7" r="6" fill="#d42f25"/><text x="19" y="11">1</text></svg><span>13°C</span><span lang="ar" dir="rtl">غائم غالبًا</span></button>
    <button class="t24" aria-label="Show hidden icons"><svg width="12" height="8"><path d="M1 7l5-5 5 5" fill="none" stroke="#fff" stroke-width="1.400"/></svg></button>
    <button class="t24" aria-label="Meet now"><svg width="14" height="18" fill="none" stroke="#fff" stroke-width="1.300"><rect x="1.500" y="5" width="8" height="8" rx="1"/><path d="M10 7l2-1v6l-2-1M2 2q4-2 8 0M2 16q4 2 8 0"/></svg></button>
    <button class="t24" aria-label="Battery"><svg width="16" height="14" fill="none" stroke="#fff"><path d="M1.500 1v3M4.500 1v3M0 4h6v3q-3 3-6 0zM3 9v4"/><path d="M6 4.500h8v7H5M14 7h2v3h-2" stroke="#999"/><path d="M7 6l4 4M11 6l-4 4"/></svg></button>
    <button class="t24" aria-label="Network"><svg width="18" height="18" fill="none" stroke="#fff"><circle cx="8" cy="9" r="7"/><ellipse cx="8" cy="9" rx="3" ry="7"/><path d="M8 2v14M1 9h14M2 5.500h12M2 12.500h8"/><circle cx="14" cy="13" r="3" fill="#253334"/><path d="M12 11l4 4"/></svg></button>
    <button class="t24" aria-label="Volume"><svg width="18" height="16" fill="none" stroke="#fff"><path d="M1 6h2l4-4v12l-4-4H1zM9 6q2 2 0 4M11 4q4 4 0 8M13 2q6 6 0 12"/></svg></button>
    <button class="lang">ENG</button>
    <button class="clock"><span>08:27 م</span><span class="date">٢٠٢٤/١٢/٠٩</span></button>
    <button class="notes" aria-label="Notifications"><svg width="28" height="28"><path d="M2 3h15v12h-7l-3 3v-3H2z" fill="#fff"/><path d="M4 6h11M4 9h11M4 12h7" stroke="#253334"/><circle cx="17" cy="18" r="8" fill="#3d494a" stroke="#aab0b0"/><text x="17" y="22">٢٤</text></svg></button>
  </div>
</div>

<div class="watermark"><span lang="ar">مستقل</span><span>mostaql.com</span></div>
</body>
</html>
```

FILE: styles.css
```css
:root {
  --dark: #212830;
  --panel: #3b4453;
  --field: #4e5a6d;
  --text: #e4e6ea;
  --dim: #b3b7bf;
  --blue: #5f8fc4;
}

* { box-sizing: border-box; }

body {
  margin: 0;
  height: 100vh;
  display: flex;
  flex-direction: column;
  overflow: hidden;
  background: linear-gradient(#b7472a 59px, #f5f5f5 59px);
  font-family: "Noto Sans", "Open Sans", "DejaVu Sans", sans-serif;
  font-size: 11px;
  line-height: 15px;
  color: var(--text);
}

button, input, select {
  font: inherit;
  color: inherit;
  background: none;
  border: 0;
  padding: 0;
  margin: 0;
}

button { display: flex; align-items: center; justify-content: center; white-space: nowrap; }
svg { display: block; flex: none; overflow: visible; }
.defs { position: absolute; width: 0; height: 0; }

.app {
  flex: 1;
  min-height: 0;
  margin: 2px 2px 0;
  padding: 0 4px 4px;
  display: flex;
  flex-direction: column;
  background: linear-gradient(var(--dark) 28px, var(--panel) 28px);
}

/* Title bar */
.header { display: flex; background: var(--dark); }
.app-button {
  width: 40px;
  height: 41px;
  margin: 4px 0 0 1px;
  border: 1px solid #000;
  background: linear-gradient(#c9c9c9, #83868a);
}
.header-main { flex: 1; min-width: 0; }
.titlebar { display: flex; align-items: center; height: 30px; }
.qat { display: flex; align-items: center; padding-left: 5px; }
.tool { width: 24px; height: 24px; }
.drop { width: 10px; height: 24px; }
.drop::before, .caret {
  content: "";
  border: 3px solid transparent;
  border-top-color: #d8d8d8;
  border-bottom: 0;
}
.redo { margin-left: 2px; }
.custom { width: 16px; margin-left: 2px; }
.doc-title {
  flex: 1;
  margin: 0;
  display: flex;
  justify-content: center;
  gap: 15px;
  padding-bottom: 2px;
  font-size: 11px;
  font-weight: 400;
  white-space: nowrap;
}
.title-tools { display: flex; align-items: center; }
.search-toggle { width: 13px; height: 20px; }
.help-search {
  width: 178px;
  height: 20px;
  padding: 0 3px;
  background: #474f5f;
  font-style: italic;
}
.help-search::placeholder { color: #b9bdc6; opacity: 1; }
.sign-in { width: 84px; padding-left: 1px; justify-content: flex-start; }
.cart { margin-left: 5px; }
.divider { width: 1px; height: 18px; margin: 0 5px 0 6px; background: #4b5260; }
.help-drop { margin-right: 60px; }
.win { width: 25px; height: 24px; }

.ribbon-tabs {
  display: grid;
  grid-template-columns: 51px 51px 67px 78px 45px 64px 58px 61px 81px 90px 94px auto;
  justify-content: start;
  height: 19px;
  padding-left: 5px;
}
.ribbon-tabs button { color: var(--dim); padding-bottom: 2px; }
.ribbon-tabs .on { background: var(--panel); color: #fff; border-radius: 2px 2px 0 0; }
.ribbon-tabs .ribbon-min { margin-left: 22px; }

/* Ribbon */
.ribbon { display: flex; gap: 1px; padding-left: 2px; height: 97px; background: var(--dark); }
.panel { display: flex; flex-direction: column; background: var(--panel); }
.draw { width: 223px; padding-left: 2px; }
.modify { width: 132px; }
.layers { width: 272px; }
.annotation { width: 147px; }
.block { width: 79px; }
.properties { width: 221px; }
.groups { width: 68px; }
.panel-body { flex: 1; display: flex; padding-top: 4px; }
.big {
  width: 47px;
  height: 72px;
  padding-top: 2px;
  flex-direction: column;
  justify-content: flex-start;
  white-space: normal;
}
.big svg { height: 32px; margin-bottom: 4px; }
.big .caret { margin-top: 2px; }
.big.on { background: #272d38; }
.draw .big { width: 46px; }
.draw .big:first-child { width: 38px; }
.draw .big.on { width: 48px; }
.draw .big:nth-child(3) { width: 52px; }
.draw .big:nth-child(4) { width: 40px; }
.big.wide { width: 62px; }
.panel-name { height: 17px; padding-bottom: 2px; gap: 7px; }
.panel-name .caret { border-width: 4px; border-bottom: 0; }
.panel-foot { display: grid; grid-template-columns: 16px 1fr 16px; }
.panel-foot .panel-name { grid-column: 2; }

.smalls { display: grid; grid-auto-rows: 24px; align-content: start; }
.one { grid-template-columns: 24px 10px; }
.draw .one { margin-left: 1px; }
.single { grid-template-columns: 24px; }
.mods { grid-template-columns: 30px 30px 28px 6px 36px; }
.mods .tool { width: 100%; }
.layer-tools { padding: 1px 2px 0 0; flex: 1; }
.layer-grid { grid-template-columns: repeat(5, 24px); padding-top: 1px; }

.combo {
  display: flex;
  align-items: center;
  height: 22px;
  background: var(--field);
  border: 1px solid #2a313d;
}
.combo select { flex: 1; min-width: 0; appearance: none; height: 20px; }
.combo::after {
  content: "";
  margin-right: 1px;
  border: 4px solid transparent;
  border-top-color: #d8d8d8;
  border-bottom: 0;
}
.layers .combo select { padding-bottom: 1px; }
.prop-combos { flex: 1; padding: 1px 2px 0 0; display: grid; grid-auto-rows: 22px; row-gap: 1px; align-content: start; }
.swatch { width: 16px; height: 16px; margin: 0 9px 0 12px; background: #fff; border: 1px solid #ccc; }
.rule { width: 64px; height: 1px; margin: 0 2px 0 3px; background: #fff; }

.annotation .one { margin-left: -5px; }
.block .big { width: 42px; }
.block .one { margin-left: -1px; }
.properties .single { grid-template-columns: 20px; }
.properties .tool { width: 20px; }
.groups .big { width: 42px; }
.picked { background: #47607c; border: 1px solid #7cc4ff; height: 22px; margin-top: 1px; }

.folded {
  width: 60px;
  padding: 4px 0 5px;
  border: 1px solid var(--dark);
  flex-direction: column;
  justify-content: flex-start;
  background: var(--field);
}
.folded svg { margin-bottom: 3px; }
.folded .caret { margin-top: auto; border-width: 4px; border-bottom: 0; }

/* Drawing tabs */
.file-tabs {
  display: flex;
  align-items: stretch;
  height: 31px;
  padding: 5px 0 0 18px;
  background: var(--dark);
  border-bottom: 4px solid var(--panel);
}
.file-tab { position: relative; z-index: 0; display: flex; align-items: center; font-size: 11px; }
.file-tab::before, .file-tab::after {
  content: "";
  position: absolute;
  z-index: -1;
  top: 0;
  bottom: 0;
  background: #2e3541;
}
.file-tab::before { left: 0; right: 40%; border-radius: 9px 0 0 0; transform: skewX(-20deg); }
.file-tab::after { right: 0; left: 40%; border-radius: 0 9px 0 0; transform: skewX(20deg); }
.start { width: 126px; padding-left: 14px; justify-content: flex-start; color: var(--dim); }
.current { width: 182px; gap: 10px; padding-left: 11px; }
.current::before, .current::after { background: var(--panel); }
.new-tab { width: 22px; height: 14px; margin: 5px 0 0 6px; background: #2e3541; border-radius: 8px 2px 8px 2px; }

/* Model space */
.canvas { position: relative; flex: 1; min-height: 0; background: var(--dark); overflow: hidden; }
.drawing { width: 100%; height: 100%; }
.drawing path[class^="m-"] { fill: none; stroke: none; }
.m-bubble { marker: url(#bubble); }
.m-footing { marker: url(#footing); }
.m-tick { marker: url(#tick); }
.m-vtick { marker: url(#vtick); }
.cad-text { font-family: "Liberation Sans", Arial, sans-serif; font-weight: 700; }
.green { fill: #0f0; }
.red { fill: #f00; }
.viewport-label { position: absolute; top: 7px; left: 3px; display: flex; gap: 2px; }
.viewport-win { position: absolute; top: 8px; right: 10px; display: flex; gap: 8px; }
.viewcube { position: absolute; top: 36px; right: 13px; }
.cube-text { font: 700 14px "Liberation Sans", Arial, sans-serif; fill: #a9acb0; text-anchor: middle; }
.cube-top { font: 700 9px "Liberation Sans", Arial, sans-serif; fill: #4b4e53; text-anchor: middle; }
.wcs {
  position: absolute;
  top: 148px;
  right: 37px;
  width: 48px;
  height: 17px;
  gap: 6px;
  border-radius: 4px;
  background: #9496a0;
  border: 1px solid #7d7f88;
  color: #55585f;
}
.navbar {
  position: absolute;
  top: 189px;
  right: 4px;
  padding: 1px;
  border-radius: 4px;
  background: #5c6168;
  border: 1px solid #14181d;
}

/* Status bar */
.status {
  display: flex;
  justify-content: space-between;
  height: 29px;
  background: var(--dark);
  border-top: 1px solid #484b50;
}
.layout-tabs { display: flex; gap: 7px; height: 17px; padding-left: 12px; }
.layout-tabs button { width: 56px; border-radius: 0 0 8px 8px; background: #2e3541; color: var(--dim); }
.layout-tabs .on { background: var(--panel); color: #fff; font-weight: 700; }
.layout-tabs .plus { width: 22px; height: 15px; margin-left: 3px; border-radius: 8px 2px 8px 2px; }
.status-tools { display: flex; gap: 3px; padding: 1px 2px 0 0; height: 25px; }
.sg { display: flex; background: var(--panel); }
.sg button { min-width: 22px; }
.sg .drop.s { min-width: 14px; height: 24px; }
.drop.s::before, .scale .caret { border-width: 4px; border-bottom: 0; }
.sg .w25 { width: 25px; }
.sg .w24 { width: 24px; }
.sg .model-btn { width: 47px; }
.lit { background: var(--blue); }
.next { border-left: 1px solid var(--panel); }
.scale { width: 34px; gap: 3px; }

/* Taskbar */
.taskbar {
  display: flex;
  height: 40px;
  background: linear-gradient(90deg, #2f3224, #253334 30%, #25383a 60%, #223234);
  color: #fff;
}
.start-btn { width: 48px; }
.task-search {
  display: flex;
  align-items: center;
  width: 288px;
  padding-left: 11px;
  background: #f2f2f2;
  border: 1px solid #c4c4c4;
  color: #222;
}
.task-search input { flex: 1; min-width: 0; margin-left: 11px; font-size: 14px; line-height: 20px; height: 38px; }
.task-search input::placeholder { color: #333; opacity: 1; }
.task-apps { display: flex; gap: 1px; padding-left: 1px; }
.task-apps button { width: 48px; position: relative; }
.running::after { content: ""; position: absolute; left: 4px; right: 4px; bottom: 0; height: 2px; background: #76b9ed; }
.focus { background: #566162; }
.focus::after { left: 0; right: 0; }
.tray { display: flex; margin-left: auto; font-size: 12px; }
.weather { gap: 9px; margin-right: 19px; font-size: 14px; }
.weather text { font: 10px "Noto Sans", sans-serif; fill: #fff; text-anchor: middle; }
.weather [lang="ar"] { font: 13px "DejaVu Sans", sans-serif; }
.t24 { width: 24px; }
.lang { width: 36px; }
.clock { width: 68px; flex-direction: column; padding-bottom: 2px; font-family: "Noto Sans", "DejaVu Sans", sans-serif; }
.clock span { line-height: 17px; }
.clock .date { font-size: 11px; }
.notes { width: 48px; padding-right: 6px; }
.notes text { font: 10px "DejaVu Sans", sans-serif; fill: #fff; text-anchor: middle; }

/* Watermark over the desktop */
.watermark {
  position: absolute;
  left: 50%;
  bottom: 18px;
  width: 166px;
  margin-left: -83px;
  display: flex;
  flex-direction: column;
  align-items: center;
  gap: 8px;
  color: #b4b4b4;
  opacity: .45;
  pointer-events: none;
  font: 700 27px/26px "Liberation Sans", Arial, sans-serif;
}
.watermark [lang] { font: 700 48px/44px "DejaVu Sans", sans-serif; }
```
